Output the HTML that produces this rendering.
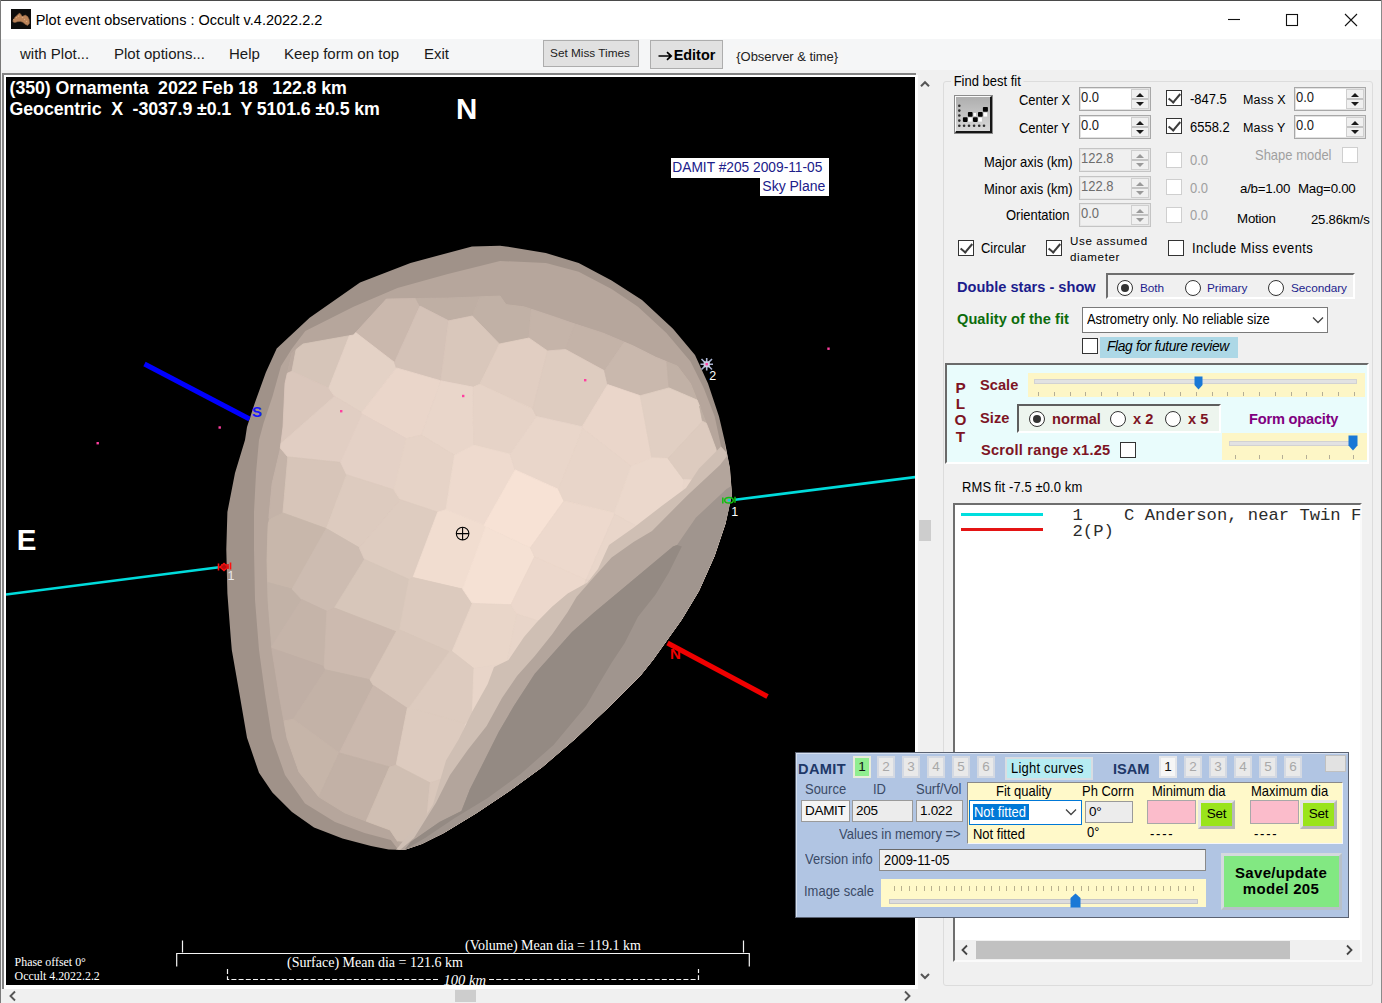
<!DOCTYPE html>
<html>
<head>
<meta charset="utf-8">
<title>Plot event observations : Occult v.4.2022.2.2</title>
<style>
*{box-sizing:border-box;margin:0;padding:0}
html,body{width:1382px;height:1003px;overflow:hidden;background:#f0f0f0}
body{font-family:"Liberation Sans",sans-serif;font-size:13px;color:#000;position:relative}
.a{position:absolute;white-space:nowrap}
.t{position:absolute;white-space:nowrap;line-height:16px;font-size:14.5px;letter-spacing:0;transform:scaleX(.895);transform-origin:0 50%}
#titlebar{left:0;top:0;width:1382px;height:39px;background:#fff;border-top:1px solid #4a4a4a}
#menubar{left:1px;top:39px;width:1380px;height:30.5px;background:#f5f6f7}
.menu{position:absolute;top:45px;font-size:15px;line-height:18px;color:#1a1a1a;white-space:nowrap}
.btn{position:absolute;background:#e1e1e1;border:1px solid #adadad;text-align:center;white-space:nowrap}
#plotframe{left:2px;top:73px;width:915px;height:915.6px;background:#fff;border:2px solid #828282;border-right:0;border-bottom:0}
#plot{left:6px;top:77px;width:909px;height:908px;background:#000;overflow:hidden}
.pl{position:absolute;white-space:nowrap;color:#fff}
.sb{position:absolute;background:#f0f0f0}
.thumb{position:absolute;background:#cdcdcd}
.spin{position:absolute;background:#fff;border:1px solid #a8a8a8;box-shadow:inset 0 0 0 1px #e2e2e2;height:24px}
.spin.dis{background:#f0f0f0;border-color:#c4c4c4;box-shadow:inset 0 0 0 1px #e6e6e6}
.spin span{position:absolute;left:0.8px;top:0.3px;color:#1c1c1c;font-size:14.5px;line-height:18px;transform:scaleX(.895);transform-origin:0 50%}
.spin.dis span{color:#6d6d6d}
.ud{position:absolute;right:1px;top:1px;width:18px;height:20px;background:#f0f0f0;border:1px solid #cfcfcf}
.ud:before{content:"";position:absolute;left:4px;top:2.5px;border:4px solid transparent;border-top:0;border-bottom:4.5px solid #1a1a1a}
.ud:after{content:"";position:absolute;left:4px;top:11.5px;border:4px solid transparent;border-bottom:0;border-top:4.5px solid #1a1a1a}
.ud i{position:absolute;left:0;right:0;top:8px;height:2px;background:#c4c4c4}
.dis .ud:before{border-bottom-color:#9a9a9a}
.dis .ud:after{border-top-color:#9a9a9a}
.cb{position:absolute;width:16px;height:16px;background:#fff;border:1px solid #333}
.cb.dis{border-color:#cfcfcf}
.cb.chk:after{content:"";position:absolute;left:4px;top:0px;width:5px;height:10px;border:solid #3c3c3c;border-width:0 2px 2px 0;transform:rotate(40deg)}
.rb{position:absolute;width:16px;height:16px;border-radius:50%;background:#fff;border:1px solid #333}
.rb.on:after{content:"";position:absolute;left:3px;top:3px;width:8px;height:8px;border-radius:50%;background:#333}
.nb{position:absolute;top:756px;width:18px;height:21.5px;margin-left:-2px;background:#e9e9e9;border:2px solid #d4d9e2;color:#a8a8a8;font-size:13.5px;line-height:17px;text-align:center}
.tb{position:absolute;top:800px;height:22px;background:#ececec;border:1px solid #9a9a9a;font-size:13.5px;line-height:20px;letter-spacing:-0.3px;padding-left:3px;white-space:nowrap}
.setb{position:absolute;top:800px;width:37px;height:29px;background:#9ae41c;border:3px solid;border-color:#e4e4e4 #b8b8b8 #b8b8b8 #e4e4e4;font-size:13.5px;line-height:22px;text-align:center;letter-spacing:-0.3px}
</style>
</head>
<body>
<!-- window chrome -->
<div class="a" id="titlebar"></div>
<div class="a" style="left:0;top:0;width:1px;height:1003px;background:#7a7a7a"></div>
<div class="a" style="left:1381px;top:0;width:1px;height:1003px;background:#8a8a8a"></div>
<svg class="a" style="left:11px;top:9px" width="20" height="20" viewBox="0 0 20 20"><rect width="20" height="20" fill="#0d0d0c"/><path d="M1.8 11.8L3.9 8.2L7 5.5L8.5 3.9L10 5.5L11.2 7.6L14.2 6.1L16.7 7.6L18.2 10.6L18.5 14.2L16.7 16.4L14.5 15.5L11.8 13.3L9.4 12.4L6.4 12.7L3.9 13.6L2.1 13Z" fill="#bb8459" stroke="#8a6040" stroke-width=".6"/><g fill="#d9a679"><circle cx="7.5" cy="7.3" r=".8"/><circle cx="5.4" cy="8.6" r=".7"/><circle cx="11.5" cy="8.4" r=".8"/><circle cx="13.5" cy="10.5" r=".7"/><circle cx="15.6" cy="12.4" r=".7"/><circle cx="2.8" cy="10.5" r=".6"/></g></svg>
<div class="a" style="left:35.7px;top:10.6px;font-size:14.5px;line-height:18px;color:#000">Plot event observations : Occult v.4.2022.2.2</div>
<svg class="a" style="left:1220px;top:8px" width="150" height="24" viewBox="0 0 150 24"><g stroke="#111" stroke-width="1.1" fill="none"><path d="M8 11.5H20"/><rect x="66.5" y="6.5" width="11" height="11"/><path d="M125 6L137 18M137 6L125 18"/></g></svg>

<!-- menu bar -->
<div class="a" id="menubar"></div>
<div class="menu" style="left:20px">with Plot...</div>
<div class="menu" style="left:114px">Plot options...</div>
<div class="menu" style="left:229px">Help</div>
<div class="menu" style="left:284px">Keep form on top</div>
<div class="menu" style="left:424px">Exit</div>
<div class="btn" style="left:543px;top:40px;width:96px;height:27px;font-size:11.8px;line-height:24px;color:#222;text-indent:-2px">Set Miss Times</div>
<div class="btn" style="left:650px;top:40px;width:73px;height:29px;font-size:14.4px;font-weight:bold;line-height:28px"><svg width="15" height="10" viewBox="0 0 15 10" style="vertical-align:-0.5px;margin-right:1px"><path d="M0.5 5H13M9 1.2L13.2 5L9 8.8" stroke="#000" stroke-width="1.7" fill="none"/></svg>Editor</div>
<div class="a" style="left:733px;top:46px;width:110px;height:22px;background:#f6f6f6"></div>
<div class="a" style="left:736.3px;top:48px;font-size:13px;line-height:18px;letter-spacing:-0.05px;color:#222">{Observer &amp; time}</div>

<!-- plot panel -->
<div class="a" id="plotframe"></div>
<div class="a" id="plot">
<svg class="a" style="left:-6px;top:-77px" width="1382" height="1003" viewBox="0 0 1382 1003">
<g id="ast"><!--AST--><defs><clipPath id="astclip"><polygon points="472.0,246.4 500.0,245.8 506.0,246.4 545.8,253.0 578.7,263.0 611.6,280.4 642.0,300.0 673.0,328.7 695.0,355.0 708.0,383.5 719.0,416.4 724.5,440.0 730.0,468.5 732.0,494.8 725.6,523.3 714.6,556.0 699.0,591.0 681.7,619.8 666.0,641.7 653.0,660.0 641.0,675.0 608.0,708.0 575.4,738.7 542.5,767.0 509.6,791.0 476.8,813.0 443.9,833.0 422.0,844.0 404.4,850.0 388.6,849.6 371.0,846.0 342.5,838.6 314.0,827.6 292.0,812.0 272.4,792.5 259.0,772.8 247.0,737.7 239.5,693.9 231.8,650.0 230.7,637.0 227.4,593.5 226.3,549.6 227.4,512.0 235.0,473.0 245.0,440.0 247.0,427.0 254.8,403.0 265.8,372.5 276.7,348.4 309.6,317.7 360.0,282.6 410.5,263.0"/></clipPath></defs>
<polygon points="472.0,246.4 500.0,245.8 506.0,246.4 545.8,253.0 578.7,263.0 611.6,280.4 642.0,300.0 673.0,328.7 695.0,355.0 708.0,383.5 719.0,416.4 724.5,440.0 730.0,468.5 732.0,494.8 725.6,523.3 714.6,556.0 699.0,591.0 681.7,619.8 666.0,641.7 653.0,660.0 641.0,675.0 608.0,708.0 575.4,738.7 542.5,767.0 509.6,791.0 476.8,813.0 443.9,833.0 422.0,844.0 404.4,850.0 388.6,849.6 371.0,846.0 342.5,838.6 314.0,827.6 292.0,812.0 272.4,792.5 259.0,772.8 247.0,737.7 239.5,693.9 231.8,650.0 230.7,637.0 227.4,593.5 226.3,549.6 227.4,512.0 235.0,473.0 245.0,440.0 247.0,427.0 254.8,403.0 265.8,372.5 276.7,348.4 309.6,317.7 360.0,282.6 410.5,263.0" fill="#a09289"/>
<g clip-path="url(#astclip)">
<polygon points="721.0,446.0 714.7,416.4 703.7,388.0 690.5,361.6 666.4,333.0 638.0,306.8 611.6,289.0 578.7,271.7 546.0,263.0 500.0,261.0 447.8,273.9 397.4,288.0 353.5,306.8 305.3,330.9 292.0,348.4 281.0,366.0 272.4,396.7 263.6,423.0 259.0,440.0 256.0,473.0 254.0,512.0 254.0,550.0 255.0,600.0 259.0,650.0 265.0,694.0 272.0,738.0 285.0,775.0 305.0,803.5 335.0,822.0 364.5,833.0 390.8,840.0 400.0,852.0 760.0,760.0" fill="#b6a69c"/>
<polygon points="716.0,449.0 708.0,427.4 699.3,405.4 690.5,383.5 677.4,366.0 655.4,357.0 633.5,346.0 602.8,333.0 572.0,323.0 556.8,317.7 524.0,306.8 506.0,304.6 500.0,296.0 447.8,298.0 386.4,299.0 353.5,335.0 303.0,344.0 292.0,352.8 285.0,383.5 283.0,427.0 280.0,450.0 272.0,484.0 268.0,527.0 267.0,560.0 268.0,600.0 272.0,650.0 279.0,694.0 287.0,738.0 299.0,772.0 319.0,797.0 345.0,813.0 371.0,823.0 390.0,830.0 400.0,845.0 760.0,760.0" fill="#c4b3a8"/>
<polygon points="291.9,371.3 296.1,349.5 292.0,352.8 287.3,373.2" fill="#baa99f" stroke="#baa99f" stroke-width=".8"/>
<polygon points="291.9,371.3 328.8,388.0 349.4,335.7 303.0,344.0 296.1,349.5" fill="#d6c5b9" stroke="#d6c5b9" stroke-width=".8"/>
<polygon points="291.9,371.3 287.3,373.2 285.0,383.5 283.0,427.0 280.9,443.5 334.5,396.3 328.8,388.0" fill="#dac7bc" stroke="#dac7bc" stroke-width=".8"/>
<polygon points="287.8,456.9 280.3,448.0 280.0,450.0 272.0,484.0 268.8,518.2 270.3,519.1 282.9,512.9" fill="#c4b3a8" stroke="#c4b3a8" stroke-width=".8"/>
<polygon points="394.5,362.4 420.0,306.0 415.8,298.5 386.4,299.0 355.7,332.6" fill="#cab8ad" stroke="#cab8ad" stroke-width=".8"/>
<polygon points="328.8,388.0 334.5,396.3 361.8,412.5 396.4,367.9 394.5,362.4 355.7,332.6 353.5,335.0 349.4,335.7" fill="#e4d2c6" stroke="#e4d2c6" stroke-width=".8"/>
<polygon points="280.9,443.5 280.3,448.0 287.8,456.9 340.7,462.4 362.3,414.1 361.8,412.5 334.5,396.3" fill="#e1cec3" stroke="#e1cec3" stroke-width=".8"/>
<polygon points="340.7,462.4 287.8,456.9 282.9,512.9 326.3,528.6 346.6,474.7" fill="#d7c5b9" stroke="#d7c5b9" stroke-width=".8"/>
<polygon points="282.9,512.9 270.3,519.1 268.4,523.0 268.0,527.0 267.0,560.0 267.6,582.4 292.1,589.1 326.3,528.6 326.3,528.6" fill="#c8b7ab" stroke="#c8b7ab" stroke-width=".8"/>
<polygon points="301.8,599.5 292.1,589.1 267.6,582.4 268.0,600.0 271.7,646.5" fill="#c2b2a7" stroke="#c2b2a7" stroke-width=".8"/>
<polygon points="448.7,320.8 472.3,316.0 480.0,296.8 447.8,298.0 415.8,298.5 420.0,306.0" fill="#bfafa4" stroke="#bfafa4" stroke-width=".8"/>
<polygon points="394.5,362.4 396.4,367.9 440.9,380.8 448.7,320.8 420.0,306.0" fill="#d4c2b7" stroke="#d4c2b7" stroke-width=".8"/>
<polygon points="362.3,414.1 406.2,438.6 421.4,435.1 440.9,380.8 440.9,380.8 396.4,367.9 361.8,412.5" fill="#ead6ca" stroke="#ead6ca" stroke-width=".8"/>
<polygon points="362.3,414.1 340.7,462.4 346.6,474.7 393.8,489.8 406.2,438.6" fill="#e4d1c6" stroke="#e4d1c6" stroke-width=".8"/>
<polygon points="326.3,528.6 326.3,528.6 359.4,547.8 400.2,499.7 393.8,489.8 346.6,474.7" fill="#ddcbbf" stroke="#ddcbbf" stroke-width=".8"/>
<polygon points="326.3,528.6 292.1,589.1 301.8,599.5 326.9,611.3 334.4,607.9 364.5,559.4 359.4,547.8" fill="#cdbcb1" stroke="#cdbcb1" stroke-width=".8"/>
<polygon points="324.2,666.5 326.9,611.3 301.8,599.5 271.7,646.5 271.9,648.4" fill="#c5b4a9" stroke="#c5b4a9" stroke-width=".8"/>
<polygon points="293.2,719.2 325.6,669.8 324.2,666.5 271.9,648.4 272.0,650.0 279.0,694.0 283.9,720.9" fill="#c0afa5" stroke="#c0afa5" stroke-width=".8"/>
<polygon points="531.4,309.2 524.0,306.8 506.0,304.6 500.0,296.0 480.0,296.8 472.3,316.0 499.5,344.0 528.9,338.0" fill="#c1b1a6" stroke="#c1b1a6" stroke-width=".8"/>
<polygon points="499.5,344.0 472.3,316.0 448.7,320.8 440.9,380.8 440.9,380.8 473.1,387.1 479.7,384.3" fill="#d9c7bb" stroke="#d9c7bb" stroke-width=".8"/>
<polygon points="473.7,445.1 473.1,387.1 440.9,380.8 421.4,435.1 454.6,455.2" fill="#e9d6ca" stroke="#e9d6ca" stroke-width=".8"/>
<polygon points="421.4,435.1 406.2,438.6 393.8,489.8 400.2,499.7 437.7,512.2 445.9,509.7 454.6,455.2" fill="#e6d3c7" stroke="#e6d3c7" stroke-width=".8"/>
<polygon points="364.5,559.4 409.1,579.4 413.0,577.5 437.7,512.2 400.2,499.7 359.4,547.8" fill="#deccc0" stroke="#deccc0" stroke-width=".8"/>
<polygon points="334.4,607.9 396.2,631.7 399.5,629.8 409.1,579.4 364.5,559.4" fill="#d7c6ba" stroke="#d7c6ba" stroke-width=".8"/>
<polygon points="334.4,607.9 326.9,611.3 324.2,666.5 325.6,669.8 370.0,679.7 396.2,631.7" fill="#ccbaaf" stroke="#ccbaaf" stroke-width=".8"/>
<polygon points="370.0,679.7 325.6,669.8 293.2,719.2 339.3,752.9 339.3,752.9 373.5,685.5" fill="#c3b2a7" stroke="#c3b2a7" stroke-width=".8"/>
<polygon points="339.3,752.9 293.2,719.2 283.9,720.9 287.0,738.0 299.0,772.0 318.9,796.9" fill="#c6b5a9" stroke="#c6b5a9" stroke-width=".8"/>
<polygon points="565.6,349.5 575.1,324.0 572.0,323.0 556.8,317.7 531.4,309.2 528.9,338.0 547.5,350.9" fill="#c5b4a9" stroke="#c5b4a9" stroke-width=".8"/>
<polygon points="532.7,408.9 547.5,350.9 528.9,338.0 499.5,344.0 479.7,384.3" fill="#e1cec2" stroke="#e1cec2" stroke-width=".8"/>
<polygon points="536.6,416.5 532.7,408.9 479.7,384.3 473.1,387.1 473.7,445.1 510.1,454.2" fill="#e6d3c7" stroke="#e6d3c7" stroke-width=".8"/>
<polygon points="510.1,454.2 473.7,445.1 454.6,455.2 445.9,509.7 484.1,524.9 515.2,469.9" fill="#eedace" stroke="#eedace" stroke-width=".8"/>
<polygon points="445.9,509.7 437.7,512.2 413.0,577.5 462.7,589.1 485.6,527.1 484.1,524.9" fill="#f1ddd0" stroke="#f1ddd0" stroke-width=".8"/>
<polygon points="399.5,629.8 449.5,651.7 452.1,651.4 472.3,603.4 462.7,589.1 413.0,577.5 409.1,579.4" fill="#dccabe" stroke="#dccabe" stroke-width=".8"/>
<polygon points="409.3,707.7 449.5,651.7 399.5,629.8 396.2,631.7 370.0,679.7 373.5,685.5 407.3,708.3" fill="#d8c6ba" stroke="#d8c6ba" stroke-width=".8"/>
<polygon points="373.5,685.5 339.3,752.9 389.6,767.0 396.1,765.2 407.3,708.3" fill="#cab8ad" stroke="#cab8ad" stroke-width=".8"/>
<polygon points="389.6,767.0 339.3,752.9 339.3,752.9 318.9,796.9 319.0,797.0 345.0,813.0 366.2,821.2" fill="#c2b1a6" stroke="#c2b1a6" stroke-width=".8"/>
<polygon points="604.5,370.8 624.4,342.1 602.8,333.0 575.1,324.0 565.6,349.5" fill="#c4b3a8" stroke="#c4b3a8" stroke-width=".8"/>
<polygon points="536.6,416.5 582.1,426.7 607.7,384.6 604.5,370.8 565.6,349.5 547.5,350.9 532.7,408.9" fill="#deccc0" stroke="#deccc0" stroke-width=".8"/>
<polygon points="558.5,489.4 582.9,428.5 582.1,426.7 536.6,416.5 510.1,454.2 515.2,469.9" fill="#e9d6ca" stroke="#e9d6ca" stroke-width=".8"/>
<polygon points="484.1,524.9 485.6,527.1 530.4,547.7 563.9,500.9 558.5,489.4 515.2,469.9" fill="#f7e2d5" stroke="#f7e2d5" stroke-width=".8"/>
<polygon points="534.5,556.7 530.4,547.7 485.6,527.1 462.7,589.1 472.3,603.4 510.9,604.8" fill="#f5e1d4" stroke="#f5e1d4" stroke-width=".8"/>
<polygon points="516.8,613.9 510.9,604.8 472.3,603.4 452.1,651.4 473.9,668.6 504.2,663.7 507.0,662.4" fill="#e9d6c9" stroke="#e9d6c9" stroke-width=".8"/>
<polygon points="473.9,668.6 452.1,651.4 449.5,651.7 409.3,707.7 465.8,723.7 468.9,721.7 472.3,714.7" fill="#ddcbbf" stroke="#ddcbbf" stroke-width=".8"/>
<polygon points="396.1,765.2 430.2,782.9 442.2,778.7 447.4,761.2 460.3,739.5 460.3,739.4 462.0,736.0 465.8,723.7 409.3,707.7 407.3,708.3" fill="#ddcbbf" stroke="#ddcbbf" stroke-width=".8"/>
<polygon points="389.6,767.0 366.2,821.2 371.0,823.0 390.0,830.0 397.8,841.7 404.3,842.2 407.7,838.0 423.0,823.1 423.2,822.9 423.3,822.8 426.9,817.0 430.2,782.9 396.1,765.2" fill="#d0bfb3" stroke="#d0bfb3" stroke-width=".8"/>
<polygon points="397.8,841.7 400.0,845.0 402.4,844.4 404.3,842.2" fill="#b9a99f" stroke="#b9a99f" stroke-width=".8"/>
<polygon points="604.5,370.8 607.7,384.6 640.3,395.7 669.0,387.9 666.8,361.7 655.4,357.0 633.5,346.0 624.4,342.1" fill="#c9b8ad" stroke="#c9b8ad" stroke-width=".8"/>
<polygon points="582.9,428.5 631.1,466.3 651.8,457.8 640.3,395.7 607.7,384.6 582.1,426.7" fill="#ead6ca" stroke="#ead6ca" stroke-width=".8"/>
<polygon points="563.9,500.9 614.1,513.0 631.1,466.3 582.9,428.5 558.5,489.4" fill="#e8d5c9" stroke="#e8d5c9" stroke-width=".8"/>
<polygon points="586.3,579.7 614.6,514.2 614.1,513.0 563.9,500.9 530.4,547.7 534.5,556.7 585.9,579.8" fill="#edd9cd" stroke="#edd9cd" stroke-width=".8"/>
<polygon points="534.5,556.7 510.9,604.8 516.8,613.9 539.8,621.3 553.0,607.8 568.6,594.7 584.2,586.0 585.9,579.8" fill="#ecd8cc" stroke="#ecd8cc" stroke-width=".8"/>
<polygon points="516.8,613.9 507.0,662.4 509.2,661.4 509.3,661.3 509.4,661.2 509.5,661.1 509.6,661.0 509.7,660.8 525.2,637.9 538.1,623.0 539.8,621.3" fill="#e8d5c9" stroke="#e8d5c9" stroke-width=".8"/>
<polygon points="473.9,668.6 472.3,714.7 473.3,712.7 489.0,684.7 489.1,684.6 489.1,684.5 495.2,668.1 504.2,663.7" fill="#e8d5c9" stroke="#e8d5c9" stroke-width=".8"/>
<polygon points="465.8,723.7 462.0,736.0 468.9,721.7" fill="#ead7cb" stroke="#ead7cb" stroke-width=".8"/>
<polygon points="497.5,797.3 476.0,811.7 443.2,831.7 431.5,837.6 437.8,836.1 443.9,833.0 476.8,813.0 498.1,798.7" fill="#cebdb1" stroke="#cebdb1" stroke-width=".8"/>
<polygon points="430.2,782.9 426.9,817.0 434.3,805.3 434.3,805.2 434.4,805.1 434.4,804.9 440.9,782.9 442.2,778.7" fill="#d9c7bb" stroke="#d9c7bb" stroke-width=".8"/>
<polygon points="669.0,387.9 697.1,400.0 690.5,383.5 677.4,366.0 666.8,361.7" fill="#c1b1a6" stroke="#c1b1a6" stroke-width=".8"/>
<polygon points="699.6,406.2 699.3,405.4 697.1,400.0 669.0,387.9 640.3,395.7 651.8,457.8 668.0,458.5 702.5,421.2" fill="#e1cfc3" stroke="#e1cfc3" stroke-width=".8"/>
<polygon points="668.0,458.5 651.8,457.8 631.1,466.3 614.1,513.0 614.6,514.2 637.5,526.5 662.9,507.0 683.3,491.9 683.6,479.6" fill="#ebd8cc" stroke="#ebd8cc" stroke-width=".8"/>
<polygon points="614.6,514.2 586.3,579.7 590.7,580.8 599.2,569.9 599.3,569.8 599.4,569.6 610.2,546.0 634.4,528.9 634.4,528.9 637.5,526.5" fill="#e9d6ca" stroke="#e9d6ca" stroke-width=".8"/>
<polygon points="584.2,586.0 588.2,583.8 588.4,583.7 588.5,583.6 588.6,583.5 588.7,583.4 590.7,580.8 586.3,579.7 585.9,579.8" fill="#e6d3c8" stroke="#e6d3c8" stroke-width=".8"/>
<polygon points="578.5,733.7 574.4,737.6 550.6,758.1 552.1,758.7 574.9,739.2" fill="#e5d2c7" stroke="#e5d2c7" stroke-width=".8"/>
<polygon points="498.1,798.7 509.6,791.0 542.5,767.0 552.1,758.7 550.6,758.1 541.6,765.8 508.7,789.8 497.5,797.3" fill="#dccabe" stroke="#dccabe" stroke-width=".8"/>
<polygon points="702.5,421.2 706.3,423.2 699.6,406.2" fill="#beaea3" stroke="#beaea3" stroke-width=".8"/>
<polygon points="702.5,421.2 668.0,458.5 683.6,479.6 693.2,479.9 700.2,469.5 716.6,453.1 716.0,449.0 708.0,427.4 706.3,423.2" fill="#ddcbbf" stroke="#ddcbbf" stroke-width=".8"/>
<polygon points="683.6,479.6 683.3,491.9 686.9,489.2 687.0,489.1 687.1,489.0 687.2,488.9 687.2,488.8 693.2,479.9" fill="#e9d6ca" stroke="#e9d6ca" stroke-width=".8"/>
<polygon points="725.8,522.6 726.2,520.8 725.6,516.6 724.2,522.9 722.9,526.6" fill="#c5b4a9" stroke="#c5b4a9" stroke-width=".8"/>
<polygon points="686.1,609.6 680.4,619.0 664.8,640.8 664.8,640.8 651.8,659.1 649.2,662.4 650.5,663.2 653.0,660.0 666.0,641.7 681.7,619.8 687.0,611.0" fill="#e8d5c9" stroke="#e8d5c9" stroke-width=".8"/>
<polygon points="649.2,662.4 639.9,674.0 607.0,706.9 594.5,718.6 596.0,719.3 608.0,708.0 641.0,675.0 650.5,663.2" fill="#e5d3c7" stroke="#e5d3c7" stroke-width=".8"/>
<polygon points="574.9,739.2 575.4,738.7 596.0,719.3 594.5,718.6 578.5,733.7" fill="#ead7cb" stroke="#ead7cb" stroke-width=".8"/>
<polygon points="716.0,551.7 725.6,523.3 725.8,522.6 722.9,526.6 714.8,550.8" fill="#dac8bd" stroke="#dac8bd" stroke-width=".8"/>
<polygon points="714.8,550.8 713.2,555.5 697.7,590.3 686.1,609.6 687.0,611.0 699.0,591.0 714.6,556.0 716.0,551.7" fill="#e8d5c9" stroke="#e8d5c9" stroke-width=".8"/>
<polygon points="726.0,452.0 721.0,446.6 699.0,468.5 686.0,488.0 662.0,505.8 633.5,527.7 609.0,545.0 598.0,569.0 587.5,582.5 567.7,593.5 552.0,606.7 537.0,622.0 524.0,637.0 508.5,660.0 494.0,667.0 487.7,684.0 472.0,712.0 459.0,738.7 446.0,760.6 439.5,782.5 433.0,804.5 422.0,822.0 406.6,837.0 396.0,849.8 404.4,850.0 422.0,844.0 443.9,833.0 476.8,813.0 509.6,791.0 542.5,767.0 575.4,738.7 608.0,708.0 641.0,675.0 653.0,660.0 666.0,641.7 681.7,619.8 699.0,591.0 714.6,556.0 725.6,523.3 732.0,494.8 730.0,468.5 724.5,440.0" fill="#cfbfb4"/>
<polygon points="727.0,456.0 720.0,465.0 687.0,495.8 652.0,530.9 633.5,542.0 611.6,557.5 594.0,577.0 576.5,597.0 567.7,612.0 552.4,634.0 534.8,656.0 517.0,676.0 502.0,698.0 486.6,726.0 467.7,750.0 450.0,775.0 436.0,802.8 414.0,838.0 400.0,850.0 404.4,850.0 422.0,844.0 443.9,833.0 476.8,813.0 509.6,791.0 542.5,767.0 575.4,738.7 608.0,708.0 641.0,675.0 653.0,660.0 666.0,641.7 681.7,619.8 699.0,591.0 714.6,556.0 725.6,523.3 732.0,494.8 730.0,468.5 724.5,440.0" fill="#b3a59c"/>
<polygon points="731.5,486.0 726.5,489.0 695.8,517.7 677.0,545.0 673.0,546.6 646.7,568.5 620.4,590.4 594.0,612.4 572.0,632.0 552.4,654.0 534.8,673.8 514.0,705.8 498.7,732.0 483.3,762.8 470.0,789.0 461.4,811.0 439.5,822.0 411.0,841.8 404.4,850.0 404.4,850.0 422.0,844.0 443.9,833.0 476.8,813.0 509.6,791.0 542.5,767.0 575.4,738.7 608.0,708.0 641.0,675.0 653.0,660.0 666.0,641.7 681.7,619.8 699.0,591.0 714.6,556.0 725.6,523.3 732.0,494.8" fill="#a0958e"/>
<polygon points="677.0,545.0 673.0,546.6 646.7,568.5 620.4,590.4 594.0,612.4 572.0,632.0 552.4,654.0 534.8,673.8 514.0,705.8 498.7,732.0 483.3,762.8 470.0,789.0 461.4,811.0 439.5,822.0 411.0,841.8 404.4,850.0 404.4,850.0 425.0,838.0 454.8,818.0 487.7,798.0 520.6,774.0 553.5,745.0 586.0,706.0 598.4,684.7 611.6,662.8 624.7,643.0 638.0,616.8 655.4,594.8 668.6,572.9 681.8,546.6 677.0,545.0" fill="#948a83"/>
</g><!--/AST--></g>
<g fill="#ff3fa0">
<rect x="96.5" y="442" width="2.4" height="2.4"/><rect x="218.5" y="426.3" width="2.4" height="2.4"/><rect x="340" y="410" width="2.4" height="2.4"/><rect x="462" y="394.8" width="2.4" height="2.4"/><rect x="584" y="379" width="2.4" height="2.4"/><rect x="827.3" y="347.5" width="2.4" height="2.4"/>
</g>
<line x1="144.5" y1="364" x2="249.5" y2="419" stroke="#0000ff" stroke-width="5"/>
<text x="252" y="416.5" font-family="Liberation Sans" font-size="15" font-weight="bold" fill="#1515ff">S</text>
<line x1="6" y1="594.5" x2="219" y2="567.3" stroke="#00dcdc" stroke-width="2.6"/>
<line x1="735" y1="499.8" x2="916" y2="477" stroke="#00dcdc" stroke-width="2.6"/>
<line x1="667.5" y1="643" x2="767.5" y2="696.5" stroke="#f00000" stroke-width="5"/>
<text x="670" y="658.5" font-family="Liberation Sans" font-size="15" font-weight="bold" fill="#f00000">N</text>
<g stroke="#ff1010" stroke-width="1.6" fill="none"><path d="M218.5 563.5v7M230.5 562.5v7M220 567l4-3.5l4 3.5l-4 3.5z"/></g>
<rect x="221" y="564" width="8" height="5" fill="#e01010" opacity=".8"/>
<text x="227.5" y="580" font-family="Liberation Sans" font-size="12.5" fill="#e8e8e8">1</text>
<g stroke="#10c010" stroke-width="1.5" fill="none"><path d="M722.8 497.5v6M735 496.8v6"/><ellipse cx="729" cy="500.3" rx="4.3" ry="2.8"/></g>
<circle cx="729" cy="500.3" r="1.3" fill="#00dcdc"/>
<text x="731.2" y="516" font-family="Liberation Sans" font-size="12.5" fill="#fff">1</text>
<g stroke="#aab4d2" stroke-width="1.6"><path d="M701.5 359l10.5 10.5M712 359l-10.5 10.5M706.7 358v12.5M700.5 364.3h12.5"/></g>
<rect x="703.7" y="361.3" width="6" height="6" fill="#c8cce4"/>
<rect x="705.5" y="363" width="2.4" height="2.4" fill="#ff3fa0"/>
<text x="709.3" y="379.5" font-family="Liberation Sans" font-size="12.5" fill="#fff">2</text>
<g stroke="#000" stroke-width="1.1" fill="none"><circle cx="462.6" cy="533.6" r="6.3"/><path d="M456.3 533.6h12.6M462.6 527.3v12.6"/></g>
<g stroke="#f4f4f4" stroke-width="1.2" fill="none">
<path d="M182.5 940.5v12M743.5 940.5v12M176.7 966.5v-13h572.6v13"/>
<path d="M227.5 969v10.5h212M489 979.5h209.5v-10.5" stroke-dasharray="5 2.2"/>
</g>
</svg>
<div class="pl" style="left:3.6px;top:1.2px;font-size:17.8px;font-weight:bold;line-height:20px;letter-spacing:-0.1px;white-space:pre">(350) Ornamenta  2022 Feb 18   122.8 km</div>
<div class="pl" style="left:3.6px;top:21.5px;font-size:17.8px;font-weight:bold;line-height:20px;letter-spacing:-0.1px;white-space:pre">Geocentric  X  -3037.9 ±0.1  Y 5101.6 ±0.5 km</div>
<div class="pl" style="left:450px;top:15px;font-size:29.5px;font-weight:bold;line-height:34px">N</div>
<div class="pl" style="left:10.8px;top:446.2px;font-size:29.5px;font-weight:bold;line-height:34px">E</div>
<div class="pl" style="left:665px;top:81px;width:158px;height:19.6px;background:#fff"></div>
<div class="pl" style="left:753.8px;top:100px;width:69.2px;height:19.4px;background:#fff"></div>
<div class="pl" style="left:666.3px;top:83.3px;font-size:13.75px;line-height:16px;color:#20208a">DAMIT #205 2009-11-05</div>
<div class="pl" style="left:756.3px;top:100.9px;font-size:14px;line-height:16px;color:#20208a">Sky Plane</div>
<div class="pl" style="left:8.6px;top:877.6px;font-family:'Liberation Serif',serif;font-size:11.9px;line-height:14px">Phase offset 0°</div>
<div class="pl" style="left:8.6px;top:892.4px;font-family:'Liberation Serif',serif;font-size:11.9px;line-height:14px">Occult 4.2022.2.2</div>
<div class="pl" style="left:459px;top:861.3px;font-family:'Liberation Serif',serif;font-size:14px;line-height:16px">(Volume) Mean dia = 119.1 km</div>
<div class="pl" style="left:281px;top:878.3px;font-family:'Liberation Serif',serif;font-size:14px;line-height:16px">(Surface) Mean dia = 121.6 km</div>
<div class="pl" style="left:437.5px;top:895.3px;font-family:'Liberation Serif',serif;font-style:italic;font-size:14.6px;line-height:16px">100 km</div>
</div>

<!-- scrollbars of plot -->
<div class="sb" style="left:3px;top:989px;width:913px;height:14px"></div>
<div class="sb" style="left:916px;top:73px;width:17px;height:913px"></div>
<!--SCROLL-->
<div class="a" style="left:915px;top:75px;width:3px;height:913.6px;background:#fdfdfd"></div>
<div class="thumb" style="left:919px;top:520px;width:12px;height:21px"></div>
<div class="thumb" style="left:455px;top:990px;width:21px;height:12px"></div>
<svg class="a" style="left:919px;top:78px" width="12" height="10" viewBox="0 0 12 10"><path d="M2 8.2L6 4.2L10 8.2" stroke="#555" stroke-width="2" fill="none"/></svg>
<svg class="a" style="left:919px;top:972px" width="12" height="10" viewBox="0 0 12 10"><path d="M2 2L6 6L10 2" stroke="#555" stroke-width="2" fill="none"/></svg>
<svg class="a" style="left:902px;top:990px" width="10" height="12" viewBox="0 0 10 12"><path d="M3 1.5L7.5 6L3 10.5" stroke="#555" stroke-width="1.9" fill="none"/></svg>
<svg class="a" style="left:8px;top:990px" width="10" height="12" viewBox="0 0 10 12"><path d="M7 1.5L2.5 6L7 10.5" stroke="#555" stroke-width="1.9" fill="none"/></svg>
<!--/SCROLL-->

<!-- right panel -->
<!--RIGHT-->
<div class="a" style="left:943px;top:81px;width:430px;height:905px;border:1px solid #dcdcdc;border-radius:3px"></div>
<div class="t" style="left:951px;top:73px;padding:0 3px;background:#f0f0f0">Find best fit</div>
<!-- icon button -->
<div class="a" style="left:954px;top:95px;width:39px;height:39px;background:linear-gradient(#adadad,#c4c4c4 50%,#dcdcdc);border:1px solid #8c8c8c"></div>
<div class="a" style="left:955px;top:96px;width:37px;height:37px;border:solid;border-width:1.5px 2px 2px 1.5px;border-color:#fafafa #161616 #161616 #fafafa"></div>
<svg class="a" style="left:954px;top:96px" width="39" height="39" viewBox="0 0 39 39"><g fill="#2e2e2e"><circle cx="5.3" cy="9.8" r="1.3"/><circle cx="5.3" cy="14.6" r="1.3"/><circle cx="5.3" cy="19.5" r="1.3"/><circle cx="5.3" cy="24.6" r="1.3"/><circle cx="5.3" cy="29.7" r="1.3"/><circle cx="10.1" cy="29.7" r="1.3"/><circle cx="15" cy="29.7" r="1.3"/><circle cx="20.1" cy="29.7" r="1.3"/><circle cx="25.2" cy="29.7" r="1.3"/><circle cx="30" cy="29.7" r="1.3"/></g><g fill="#fff"><rect x="14.2" y="21.6" width="3.6" height="4"/><rect x="19.6" y="17" width="2.4" height="3"/><rect x="24.3" y="21.6" width="3.6" height="4"/><rect x="29.6" y="16.6" width="3.6" height="4"/></g><g fill="#050505"><rect x="8.9" y="21.2" width="4.7" height="4.7" rx=".8"/><rect x="13.9" y="16.1" width="4.7" height="4.7" rx=".8"/><rect x="19" y="21.2" width="4.7" height="4.7" rx=".8"/><rect x="24" y="16.1" width="4.7" height="4.7" rx=".8"/><rect x="28.9" y="11" width="5" height="4.7" rx=".8"/></g></svg>
<div class="t" style="left:1019px;top:92px">Center X</div>
<div class="spin" style="left:1079px;top:87px;width:72px"><span>0.0</span><div class="ud"><i></i></div></div>
<div class="t" style="left:1019px;top:120px">Center Y</div>
<div class="spin" style="left:1079px;top:115px;width:72px"><span>0.0</span><div class="ud"><i></i></div></div>
<div class="cb chk" style="left:1166px;top:90px"></div>
<div class="t" style="left:1190px;top:91px">-847.5</div>
<div class="cb chk" style="left:1166px;top:118px"></div>
<div class="t" style="left:1190px;top:119px">6558.2</div>
<div class="t" style="transform:none;left:1243px;top:92px;font-size:12.5px;letter-spacing:0.2px">Mass X</div>
<div class="spin" style="left:1294px;top:87px;width:72px"><span>0.0</span><div class="ud"><i></i></div></div>
<div class="t" style="transform:none;left:1243px;top:120px;font-size:12.5px;letter-spacing:0.2px">Mass Y</div>
<div class="spin" style="left:1294px;top:115px;width:72px"><span>0.0</span><div class="ud"><i></i></div></div>

<div class="t" style="left:984px;top:154px">Major axis (km)</div>
<div class="spin dis" style="left:1079px;top:148px;width:72px"><span>122.8</span><div class="ud"><i></i></div></div>
<div class="cb dis" style="left:1166px;top:152px"></div>
<div class="t" style="left:1190px;top:152px;color:#a0a0a0">0.0</div>
<div class="t" style="left:984px;top:181px">Minor axis (km)</div>
<div class="spin dis" style="left:1079px;top:176px;width:72px"><span>122.8</span><div class="ud"><i></i></div></div>
<div class="cb dis" style="left:1166px;top:179px"></div>
<div class="t" style="left:1190px;top:180px;color:#a0a0a0">0.0</div>
<div class="t" style="left:1006px;top:207px">Orientation</div>
<div class="spin dis" style="left:1079px;top:203px;width:72px"><span>0.0</span><div class="ud"><i></i></div></div>
<div class="cb dis" style="left:1166px;top:207px"></div>
<div class="t" style="left:1190px;top:207px;color:#a0a0a0">0.0</div>
<div class="t" style="left:1255px;top:147px;color:#a0a0a0">Shape model</div>
<div class="cb dis" style="left:1342px;top:147px"></div>
<div class="t" style="transform:none;left:1240px;top:181px;font-size:13.3px;letter-spacing:-0.25px">a/b=1.00</div>
<div class="t" style="transform:none;left:1298px;top:181px;font-size:13.3px;letter-spacing:-0.25px">Mag=0.00</div>
<div class="t" style="transform:none;left:1237px;top:211px;font-size:13.3px;letter-spacing:-0.2px">Motion</div>
<div class="t" style="transform:none;left:1311px;top:212px;font-size:13.1px;letter-spacing:-0.2px">25.86km/s</div>

<div class="cb chk" style="left:958px;top:240px"></div>
<div class="t" style="left:981px;top:240px">Circular</div>
<div class="cb chk" style="left:1046px;top:240px"></div>
<div class="t" style="transform:none;left:1070px;top:233px;font-size:11.6px;line-height:16px;letter-spacing:.62px">Use assumed<br>diameter</div>
<div class="cb" style="left:1168px;top:240px"></div>
<div class="t" style="left:1192px;top:240px;letter-spacing:0.42px">Include Miss events</div>

<div class="t" style="transform:none;left:957px;top:279px;font-size:14.6px;font-weight:bold;color:#1c1c8c;letter-spacing:0">Double stars - show</div>
<div class="a" style="left:1106px;top:273px;width:249px;height:26px;border:2px solid;border-color:#6e6e6e #fff #fff #6e6e6e"></div>
<div class="rb on" style="left:1117px;top:280px"></div>
<div class="t" style="transform:none;left:1140px;top:280px;font-size:11.8px;color:#1c1c8c;letter-spacing:-0.05px">Both</div>
<div class="rb" style="left:1185px;top:280px"></div>
<div class="t" style="transform:none;left:1207px;top:280px;font-size:11.8px;color:#1c1c8c;letter-spacing:-0.05px">Primary</div>
<div class="rb" style="left:1268px;top:280px"></div>
<div class="t" style="transform:none;left:1291px;top:280px;font-size:11.8px;color:#1c1c8c;letter-spacing:-0.05px">Secondary</div>

<div class="t" style="transform:none;left:957px;top:311px;font-size:14.6px;font-weight:bold;color:#0c6c0c;letter-spacing:0.05px">Quality of the fit</div>
<div class="a" style="left:1082px;top:307px;width:246px;height:26px;background:#fff;border:1px solid #7a7a7a"></div>
<div class="t" style="left:1086.5px;top:311px;letter-spacing:-0.08px">Astrometry only. No reliable size</div>
<svg class="a" style="left:1311px;top:316px" width="14" height="9" viewBox="0 0 14 9"><path d="M2 1.5L7 6.5L12 1.5" stroke="#444" stroke-width="1.3" fill="none"/></svg>
<div class="cb" style="left:1082px;top:338px"></div>
<div class="a" style="left:1100px;top:337px;width:138px;height:21px;background:#add8e6"></div>
<div class="t" style="transform:none;left:1107px;top:339px;font-style:italic;font-size:13.8px;letter-spacing:-0.35px">Flag for future review</div>

<!-- PLOT sub panel -->
<div class="a" style="left:945px;top:363px;width:424px;height:101px;background:#e9fcfc;border:2px solid;border-color:#6a6a6a #fff #fff #6a6a6a"></div>
<div class="a" style="left:953.5px;top:379.5px;width:14px;font-size:15.3px;font-weight:bold;color:#7d1424;line-height:16.4px;white-space:normal;text-align:center">P L O T</div>
<div class="t" style="transform:none;left:980px;top:377px;font-size:14.6px;font-weight:bold;color:#7d1424;letter-spacing:0.05px">Scale</div>
<div class="a" style="left:1028px;top:373px;width:337px;height:24px;background:#fdf6c6"></div>
<div class="a" style="left:1034px;top:379px;width:323px;height:5px;background:#e2e2e2;border:1px solid #d2d2d2"></div>
<div class="a" style="left:1038px;top:392px;width:317px;height:4px;background:repeating-linear-gradient(90deg,#b4ae96 0 1px,transparent 1px 15.79px)"></div>
<svg class="a" style="left:1194px;top:376px" width="9" height="14" viewBox="0 0 9 14"><path d="M.5 .5h8v8.5l-4 4.5l-4-4.5z" fill="#1a78d6"/></svg>
<div class="t" style="transform:none;left:980px;top:410px;font-size:14.6px;font-weight:bold;color:#7d1424;letter-spacing:0.05px">Size</div>
<div class="a" style="left:1017px;top:404px;width:204px;height:29px;background:#edf5ee;border:2px solid;border-color:#5e5e5e #fff #fff #5e5e5e"></div>
<div class="rb on" style="left:1029px;top:411px"></div>
<div class="t" style="transform:none;left:1052px;top:411px;font-size:14.6px;font-weight:bold;color:#7d1424;letter-spacing:0.05px">normal</div>
<div class="rb" style="left:1110px;top:411px"></div>
<div class="t" style="transform:none;left:1133px;top:411px;font-size:14.6px;font-weight:bold;color:#7d1424;letter-spacing:0">x 2</div>
<div class="rb" style="left:1165px;top:411px"></div>
<div class="t" style="transform:none;left:1188px;top:411px;font-size:14.6px;font-weight:bold;color:#7d1424;letter-spacing:0">x 5</div>
<div class="t" style="transform:none;left:1249px;top:411px;font-size:14.6px;font-weight:bold;color:#800080;letter-spacing:-0.2px">Form opacity</div>
<div class="a" style="left:1222px;top:433px;width:145px;height:27px;background:#fdf6c6"></div>
<div class="a" style="left:1229px;top:441px;width:128px;height:5px;background:#e2e2e2;border:1px solid #d2d2d2"></div>
<div class="a" style="left:1235px;top:455px;width:120px;height:4px;background:repeating-linear-gradient(90deg,#b4ae96 0 1px,transparent 1px 23.5px)"></div>
<svg class="a" style="left:1347.5px;top:435px" width="10" height="16" viewBox="0 0 10 16"><path d="M.5 .5h9v10l-4.5 5l-4.5-5z" fill="#1a78d6"/></svg>
<div class="t" style="transform:none;left:981px;top:442px;font-size:14.6px;font-weight:bold;color:#7d1424;letter-spacing:0.25px">Scroll range x1.25</div>
<div class="cb" style="left:1120px;top:442px"></div>

<div class="t" style="left:962px;top:479px;letter-spacing:0.12px">RMS fit -7.5 ±0.0 km</div>
<!-- list box -->
<div class="a" style="left:953px;top:503px;width:409px;height:459px;background:#fff;border:2px solid;border-color:#6e6e6e #fafafa #fafafa #6e6e6e"></div>
<div class="a" style="left:961px;top:512.5px;width:82px;height:3.4px;background:#00dede"></div>
<div class="a" style="left:961px;top:527.8px;width:82px;height:3.4px;background:#e41414"></div>
<div class="a" style="left:1072.5px;top:508.4px;width:288px;overflow:hidden;font-family:'Liberation Mono',monospace;font-size:17.2px;line-height:15.3px;white-space:pre;color:#2c2c2c">1    C Anderson, near Twin Falls
2(P)</div>
<div class="a" style="left:955px;top:940px;width:405px;height:20px;background:#f0f0f0"></div>
<div class="a" style="left:976px;top:941px;width:314px;height:18px;background:#c1c1c1"></div>
<svg class="a" style="left:960px;top:944px" width="10" height="12" viewBox="0 0 10 12"><path d="M7 1.5L2.5 6L7 10.5" stroke="#444" stroke-width="1.8" fill="none"/></svg>
<svg class="a" style="left:1344px;top:944px" width="10" height="12" viewBox="0 0 10 12"><path d="M3 1.5L7.5 6L3 10.5" stroke="#444" stroke-width="1.8" fill="none"/></svg>
<!--/RIGHT-->

<!-- floating DAMIT panel -->
<!--DAMIT-->
<div class="a" style="left:795px;top:752px;width:554px;height:166px;background:#b1c5e3;border:1px solid #5a6272;box-shadow:inset 1px 1px 0 #d6e0f0"></div>
<div class="t" style="transform:none;left:798px;top:761px;font-size:14.6px;font-weight:bold;color:#1e3868;letter-spacing:0.35px">DAMIT</div>
<div class="nb" style="left:855px;background:#90ee90;color:#111;border-color:#e8ecdc">1</div>
<div class="nb" style="left:879px">2</div><div class="nb" style="left:904px">3</div><div class="nb" style="left:929px">4</div><div class="nb" style="left:954px">5</div><div class="nb" style="left:979px">6</div>
<div class="a" style="left:1005px;top:757px;width:88px;height:23px;background:#b6ecf2;border:2px solid #d8dde2"></div>
<div class="t" style="left:1011px;top:760px;letter-spacing:0.25px">Light curves</div>
<div class="t" style="transform:none;left:1113px;top:761px;font-size:14.6px;font-weight:bold;color:#1e3868;letter-spacing:0px">ISAM</div>
<div class="nb" style="left:1161px;background:#f6f6f6;color:#111;border-color:#e4e6ea">1</div>
<div class="nb" style="left:1186px">2</div><div class="nb" style="left:1211px">3</div><div class="nb" style="left:1236px">4</div><div class="nb" style="left:1261px">5</div><div class="nb" style="left:1286px">6</div>
<div class="a" style="left:1325px;top:755px;width:21px;height:17px;background:#e2e2e2;border:1px solid #c0c0c0"></div>
<div class="t" style="left:805px;top:781px;color:#3a4a66">Source</div>
<div class="t" style="left:873px;top:781px;color:#3a4a66">ID</div>
<div class="t" style="left:916px;top:781px;color:#3a4a66">Surf/Vol</div>
<div class="a" style="left:967px;top:782px;width:376px;height:62px;background:#fff9c9;border:1px solid;border-color:#8a8a8a #f4f6fa #f4f6fa #8a8a8a"></div>
<div class="t" style="left:996px;top:783px">Fit quality</div>
<div class="t" style="left:1082px;top:783px">Ph Corrn</div>
<div class="t" style="left:1152px;top:783px">Minimum dia</div>
<div class="t" style="left:1251px;top:783px">Maximum dia</div>
<div class="tb" style="left:801px;width:49px;background:#f4f4f4">DAMIT</div>
<div class="tb" style="left:852px;width:61px">205</div>
<div class="tb" style="left:916px;width:47px">1.022</div>
<div class="a" style="left:969px;top:800px;width:113px;height:25px;background:#fff;border:1px solid #0078d7"></div>
<div class="a" style="left:973px;top:804px;width:56px;height:16px;background:#0078d7"></div>
<div class="t" style="left:974px;top:804px;color:#fff">Not fitted</div>
<svg class="a" style="left:1064px;top:808px" width="14" height="9" viewBox="0 0 14 9"><path d="M2 1.5L7 6.5L12 1.5" stroke="#444" stroke-width="1.3" fill="none"/></svg>
<div class="tb" style="left:1085px;top:801px;width:48px">0°</div>
<div class="a" style="left:1147px;top:800px;width:49px;height:24px;background:#fbbccb;border:1px solid #a8a8a8"></div>
<div class="setb" style="left:1198px">Set</div>
<div class="a" style="left:1250px;top:800px;width:49px;height:24px;background:#fbbccb;border:1px solid #a8a8a8"></div>
<div class="setb" style="left:1300px">Set</div>
<div class="t" style="left:839px;top:826px;color:#3a4a66">Values in memory =&gt;</div>
<div class="t" style="left:973px;top:826px">Not fitted</div>
<div class="t" style="left:1087px;top:824px">0°</div>
<div class="t" style="left:1150px;top:826px;letter-spacing:2px">----</div>
<div class="t" style="left:1254px;top:826px;letter-spacing:2px">----</div>
<div class="t" style="left:805px;top:851px;color:#3a4a66">Version info</div>
<div class="a" style="left:879px;top:849px;width:327px;height:22px;background:#f1f1f1;border:1px solid #8a8a8a;border-top-color:#6a6a6a"></div>
<div class="t" style="left:884px;top:852px">2009-11-05</div>
<div class="t" style="left:804px;top:883px;color:#3a4a66">Image scale</div>
<div class="a" style="left:881px;top:879px;width:325px;height:28px;background:#fff9c9"></div>
<div class="a" style="left:894px;top:886px;width:300px;height:5px;background:repeating-linear-gradient(90deg,#b8b08e 0 1px,transparent 1px 7.47px)"></div>
<div class="a" style="left:889px;top:899px;width:309px;height:5px;background:#dcdcdc;border:1px solid #c6c6c6"></div>
<svg class="a" style="left:1070px;top:893px" width="11" height="15" viewBox="0 0 11 15"><path d="M.5 14.5h10v-9.5l-5-4.5l-5 4.5z" fill="#1a78d6"/></svg>
<div class="a" style="left:1220.5px;top:852.5px;width:121px;height:57px;background:#82e882;border:3px solid;border-color:#d4dade #b8c0c8 #b8c0c8 #d4dade"></div>
<div class="a" style="left:1221px;top:864.5px;width:120px;text-align:center;font-size:15px;font-weight:bold;line-height:16.5px;letter-spacing:0.35px;white-space:normal">Save/update<br>model 205</div>
<!--/DAMIT-->
</body>
</html>
